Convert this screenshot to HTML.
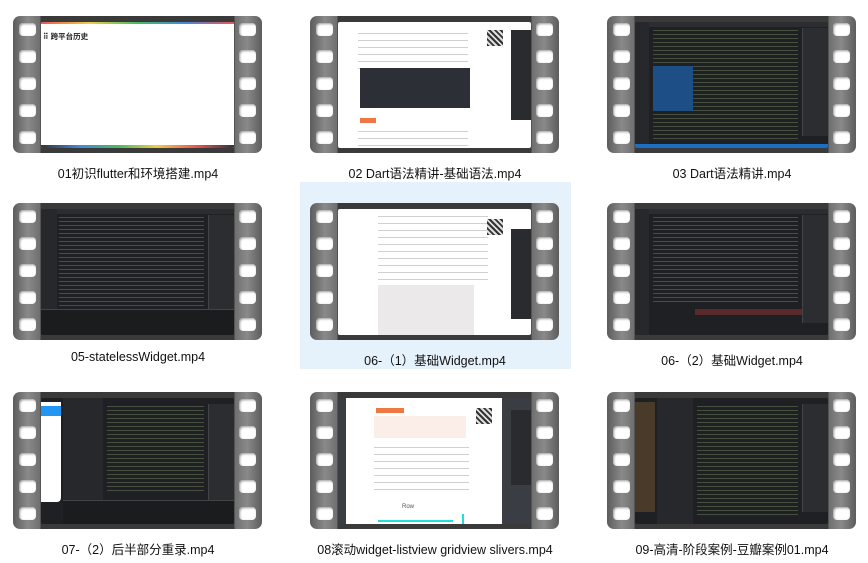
<!DOCTYPE html>
<html><head><meta charset="utf-8"><style>
*{margin:0;padding:0;box-sizing:border-box}
body{width:868px;height:563px;background:#fff;position:relative;overflow:hidden;font-family:"Liberation Sans","Noto Sans CJK SC",sans-serif}
.sel{position:absolute;left:300px;top:182px;width:271px;height:187px;background:#e5f1fb}
.f{position:absolute;width:249px;height:137px;border-radius:7px;background:linear-gradient(90deg,#5c5c5c 0,#8a8a8a 6%,#6e6e6e 11%,#3a3a3a 11%,#3a3a3a 89%,#6e6e6e 89%,#8a8a8a 94%,#5c5c5c 100%)}
.h{position:absolute;width:17px;height:13px;background:#fff;border-radius:4px;box-shadow:inset 1px 1px 2px #999}
.s{position:absolute;left:28px;top:6px;width:193px;height:126px;overflow:hidden;border-radius:2px}
.l{position:absolute;width:272px;text-align:center;font-size:12.5px;color:#111}
.ide{background:#1f2023}
.ide .c{position:absolute;left:18px;right:30px;top:6px;bottom:6px;background:repeating-linear-gradient(180deg,transparent 0,transparent 2px,rgba(140,170,120,.35) 2px,rgba(140,170,120,.35) 3px,transparent 3px,transparent 4px)}
.ide .g{position:absolute;left:0;top:0;bottom:0;width:14px;background:#27282b}
.ide .r{position:absolute;right:0;top:6px;width:26px;bottom:12px;background:#2b2d30;border-left:1px solid #444}
.ide .t{position:absolute;left:0;right:0;top:0;height:5px;background:#2b2d30}
.doc{background:#fff}
.doc .c{position:absolute;left:40px;width:110px;top:8px;height:90px;background:repeating-linear-gradient(180deg,transparent 0,transparent 3px,rgba(120,120,120,.35) 3px,rgba(120,120,120,.35) 4px,transparent 4px,transparent 7px)}
.doc .r{position:absolute;right:0;top:8px;width:20px;height:90px;background:#2a2b2e}
.doc .q{position:absolute;right:28px;top:8px;width:16px;height:16px;background:repeating-linear-gradient(45deg,#333 0,#333 2px,#ddd 2px,#ddd 4px)}
</style></head><body>
<div class="sel"></div>

<div class="f" style="left:13px;top:16px"><div class="h" style="left:6px;top:7px"></div><div class="h" style="left:6px;top:34px"></div><div class="h" style="left:6px;top:61px"></div><div class="h" style="left:6px;top:88px"></div><div class="h" style="left:6px;top:115px"></div><div class="h" style="left:226px;top:7px"></div><div class="h" style="left:226px;top:34px"></div><div class="h" style="left:226px;top:61px"></div><div class="h" style="left:226px;top:88px"></div><div class="h" style="left:226px;top:115px"></div>
<div class="s" style="background:#fff"><div style="height:2px;background:linear-gradient(90deg,#e55,#ec4,#4b6,#48d,#e55)"></div><div style="position:absolute;left:2px;top:9px;font-size:7.5px;font-weight:bold;color:#222">⠿ 跨平台历史</div><div style="position:absolute;bottom:0;left:0;right:0;height:3px;background:linear-gradient(90deg,#333,#48d,#4b6,#ec4,#e55,#333)"></div></div></div>
<div class="l" style="left:2px;top:163px">01初识flutter和环境搭建.mp4</div>

<div class="f" style="left:310px;top:16px"><div class="h" style="left:6px;top:7px"></div><div class="h" style="left:6px;top:34px"></div><div class="h" style="left:6px;top:61px"></div><div class="h" style="left:6px;top:88px"></div><div class="h" style="left:6px;top:115px"></div><div class="h" style="left:226px;top:7px"></div><div class="h" style="left:226px;top:34px"></div><div class="h" style="left:226px;top:61px"></div><div class="h" style="left:226px;top:88px"></div><div class="h" style="left:226px;top:115px"></div>
<div class="s doc"><div class="c" style="left:20px;height:40px"></div><div style="position:absolute;left:22px;top:46px;width:110px;height:40px;background:#2c2f36"></div><div class="q"></div><div class="r"></div><div style="position:absolute;left:22px;top:96px;width:16px;height:5px;background:#e74"></div><div class="c" style="left:20px;top:106px;height:20px"></div></div></div>
<div class="l" style="left:299px;top:163px">02 Dart语法精讲-基础语法.mp4</div>

<div class="f" style="left:607px;top:16px"><div class="h" style="left:6px;top:7px"></div><div class="h" style="left:6px;top:34px"></div><div class="h" style="left:6px;top:61px"></div><div class="h" style="left:6px;top:88px"></div><div class="h" style="left:6px;top:115px"></div><div class="h" style="left:226px;top:7px"></div><div class="h" style="left:226px;top:34px"></div><div class="h" style="left:226px;top:61px"></div><div class="h" style="left:226px;top:88px"></div><div class="h" style="left:226px;top:115px"></div>
<div class="s ide"><div class="t"></div><div class="g"></div><div class="c"></div><div style="position:absolute;left:18px;top:44px;width:40px;height:45px;background:#1d4f86"></div><div class="r"></div><div style="position:absolute;left:0;right:0;bottom:0;height:4px;background:#1b6fc0"></div></div></div>
<div class="l" style="left:596px;top:163px">03 Dart语法精讲.mp4</div>

<div class="f" style="left:13px;top:203px"><div class="h" style="left:6px;top:7px"></div><div class="h" style="left:6px;top:34px"></div><div class="h" style="left:6px;top:61px"></div><div class="h" style="left:6px;top:88px"></div><div class="h" style="left:6px;top:115px"></div><div class="h" style="left:226px;top:7px"></div><div class="h" style="left:226px;top:34px"></div><div class="h" style="left:226px;top:61px"></div><div class="h" style="left:226px;top:88px"></div><div class="h" style="left:226px;top:115px"></div>
<div class="s ide"><div class="t"></div><div class="g" style="width:16px"></div><div class="c" style="bottom:28px"></div><div class="r"></div><div style="position:absolute;left:0;right:0;bottom:0;height:26px;background:#1b1c1e;border-top:1px solid #444"></div></div></div>
<div class="l" style="left:2px;top:350px">05-statelessWidget.mp4</div>

<div class="f" style="left:310px;top:203px"><div class="h" style="left:6px;top:7px"></div><div class="h" style="left:6px;top:34px"></div><div class="h" style="left:6px;top:61px"></div><div class="h" style="left:6px;top:88px"></div><div class="h" style="left:6px;top:115px"></div><div class="h" style="left:226px;top:7px"></div><div class="h" style="left:226px;top:34px"></div><div class="h" style="left:226px;top:61px"></div><div class="h" style="left:226px;top:88px"></div><div class="h" style="left:226px;top:115px"></div>
<div class="s doc"><div class="c" style="top:4px;height:70px"></div><div class="q" style="top:10px"></div><div class="r" style="top:20px"></div><div style="position:absolute;left:40px;top:76px;width:96px;height:50px;background:#ece9ea"></div></div></div>
<div class="l" style="left:299px;top:350px">06-（1）基础Widget.mp4</div>

<div class="f" style="left:607px;top:203px"><div class="h" style="left:6px;top:7px"></div><div class="h" style="left:6px;top:34px"></div><div class="h" style="left:6px;top:61px"></div><div class="h" style="left:6px;top:88px"></div><div class="h" style="left:6px;top:115px"></div><div class="h" style="left:226px;top:7px"></div><div class="h" style="left:226px;top:34px"></div><div class="h" style="left:226px;top:61px"></div><div class="h" style="left:226px;top:88px"></div><div class="h" style="left:226px;top:115px"></div>
<div class="s ide"><div class="t"></div><div class="g"></div><div class="c" style="bottom:30px"></div><div style="position:absolute;left:60px;top:100px;width:130px;height:6px;background:#5a2a2a"></div><div class="r"></div></div></div>
<div class="l" style="left:596px;top:350px">06-（2）基础Widget.mp4</div>

<div class="f" style="left:13px;top:392px"><div class="h" style="left:6px;top:7px"></div><div class="h" style="left:6px;top:34px"></div><div class="h" style="left:6px;top:61px"></div><div class="h" style="left:6px;top:88px"></div><div class="h" style="left:6px;top:115px"></div><div class="h" style="left:226px;top:7px"></div><div class="h" style="left:226px;top:34px"></div><div class="h" style="left:226px;top:61px"></div><div class="h" style="left:226px;top:88px"></div><div class="h" style="left:226px;top:115px"></div>
<div class="s ide"><div style="position:absolute;left:0;top:4px;width:20px;height:100px;background:#fff;border-radius:0 0 4px 0"><div style="height:10px;background:#2196f3;margin-top:4px"></div></div><div style="position:absolute;left:22px;top:0;width:40px;bottom:0;background:#27282b"></div><div class="c" style="left:66px;bottom:30px"></div><div class="r"></div><div style="position:absolute;left:22px;right:0;bottom:0;height:24px;background:#1b1c1e;border-top:1px solid #444"></div></div></div>
<div class="l" style="left:2px;top:539px">07-（2）后半部分重录.mp4</div>

<div class="f" style="left:310px;top:392px"><div class="h" style="left:6px;top:7px"></div><div class="h" style="left:6px;top:34px"></div><div class="h" style="left:6px;top:61px"></div><div class="h" style="left:6px;top:88px"></div><div class="h" style="left:6px;top:115px"></div><div class="h" style="left:226px;top:7px"></div><div class="h" style="left:226px;top:34px"></div><div class="h" style="left:226px;top:61px"></div><div class="h" style="left:226px;top:88px"></div><div class="h" style="left:226px;top:115px"></div>
<div class="s doc" style="background:#3a3d44"><div style="position:absolute;left:8px;top:0;width:156px;bottom:0;background:#fff"></div><div style="position:absolute;left:38px;top:10px;width:28px;height:5px;background:#e74"></div><div style="position:absolute;left:36px;top:18px;width:92px;height:22px;background:#fbeee9"></div><div class="c" style="left:36px;top:46px;height:52px;width:95px"></div><div class="q" style="left:138px;top:10px"></div><div class="r" style="top:12px;height:75px"></div><div style="position:absolute;left:64px;top:106px;font-size:6px;color:#555">Row</div><div style="position:absolute;left:40px;top:122px;width:75px;height:2px;background:#2dd"></div><div style="position:absolute;left:124px;top:116px;width:2px;height:10px;background:#2dd"></div></div></div>
<div class="l" style="left:299px;top:539px">08滚动widget-listview gridview slivers.mp4</div>

<div class="f" style="left:607px;top:392px"><div class="h" style="left:6px;top:7px"></div><div class="h" style="left:6px;top:34px"></div><div class="h" style="left:6px;top:61px"></div><div class="h" style="left:6px;top:88px"></div><div class="h" style="left:6px;top:115px"></div><div class="h" style="left:226px;top:7px"></div><div class="h" style="left:226px;top:34px"></div><div class="h" style="left:226px;top:61px"></div><div class="h" style="left:226px;top:88px"></div><div class="h" style="left:226px;top:115px"></div>
<div class="s ide"><div style="position:absolute;left:0;top:4px;width:20px;height:110px;background:#4a3a2a"></div><div style="position:absolute;left:22px;top:0;width:36px;bottom:0;background:#27282b"></div><div class="c" style="left:62px"></div><div class="r"></div></div></div>
<div class="l" style="left:596px;top:539px">09-高清-阶段案例-豆瓣案例01.mp4</div>
</body></html>
